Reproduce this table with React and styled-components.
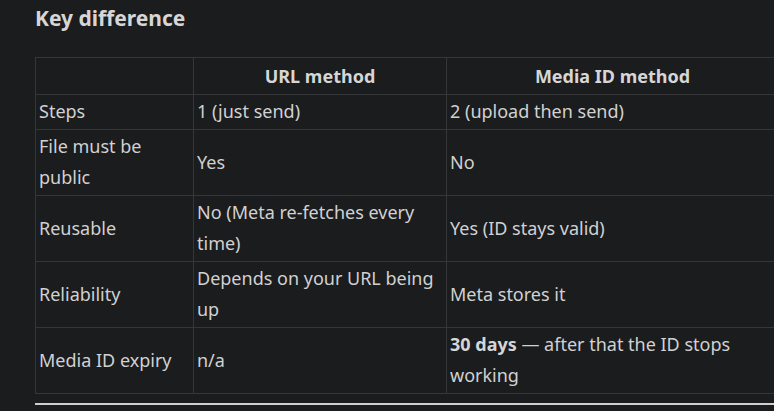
import React from 'react';
import styled, { createGlobalStyle } from 'styled-components';

const GlobalStyle = createGlobalStyle`
  html, body {
    margin: 0;
    padding: 0;
    background: #1b1c1e;
    overflow: hidden;
  }
  body {
    font-family: "Noto Sans", "Open Sans", sans-serif;
    color: #d1d1d1;
  }
`;

const Page = styled.div`
  width: 774px;
  height: 411px;
  overflow: hidden;
  padding: 0 0 0 35px;
  box-sizing: border-box;
`;

const Heading = styled.h3`
  margin: 0;
  padding-top: 3px;
  font-size: 21px;
  line-height: 30px;
  font-weight: 700;
  color: #d6d6d6;
`;

const Table = styled.table`
  margin-top: 24px;
  border-collapse: collapse;
  table-layout: fixed;
  width: 743px;
  font-size: 18px;
  line-height: 31px;
`;

const HeadCell = styled.th`
  border: 1px solid #353638;
  padding: 3px 4px 2px;
  font-weight: 700;
  text-align: center;
  height: 31px;
  color: #d6d6d6;
`;

const Cell = styled.td`
  border: 1px solid #353638;
  padding: 1px 4px 2px 3px;
  vertical-align: middle;
  text-align: left;
`;

const Strong = styled.strong`
  font-weight: 700;
  color: #d6d6d6;
`;

const Rule = styled.hr`
  margin: 9px 0 0;
  border: none;
  height: 2px;
  background: #cfcfcf;
`;

const rows = [
  ['Steps', '1 (just send)', '2 (upload then send)'],
  ['File must be public', 'Yes', 'No'],
  ['Reusable', 'No (Meta re-fetches every time)', 'Yes (ID stays valid)'],
  ['Reliability', 'Depends on your URL being up', 'Meta stores it'],
  [
    'Media ID expiry',
    'n/a',
    <>
      <Strong>30 days</Strong> — after that the ID stops working
    </>,
  ],
];

export default function App() {
  return (
    <Page>
      <GlobalStyle />
      <Heading>Key difference</Heading>
      <Table>
        <colgroup>
          <col style={{ width: 158 }} />
          <col style={{ width: 253 }} />
          <col style={{ width: 332 }} />
        </colgroup>
        <thead>
          <tr>
            <HeadCell />
            <HeadCell>URL method</HeadCell>
            <HeadCell>Media ID method</HeadCell>
          </tr>
        </thead>
        <tbody>
          {rows.map((r, i) => (
            <tr key={i}>
              {r.map((c, j) => (
                <Cell key={j}>{c}</Cell>
              ))}
            </tr>
          ))}
        </tbody>
      </Table>
      <Rule />
    </Page>
  );
}
